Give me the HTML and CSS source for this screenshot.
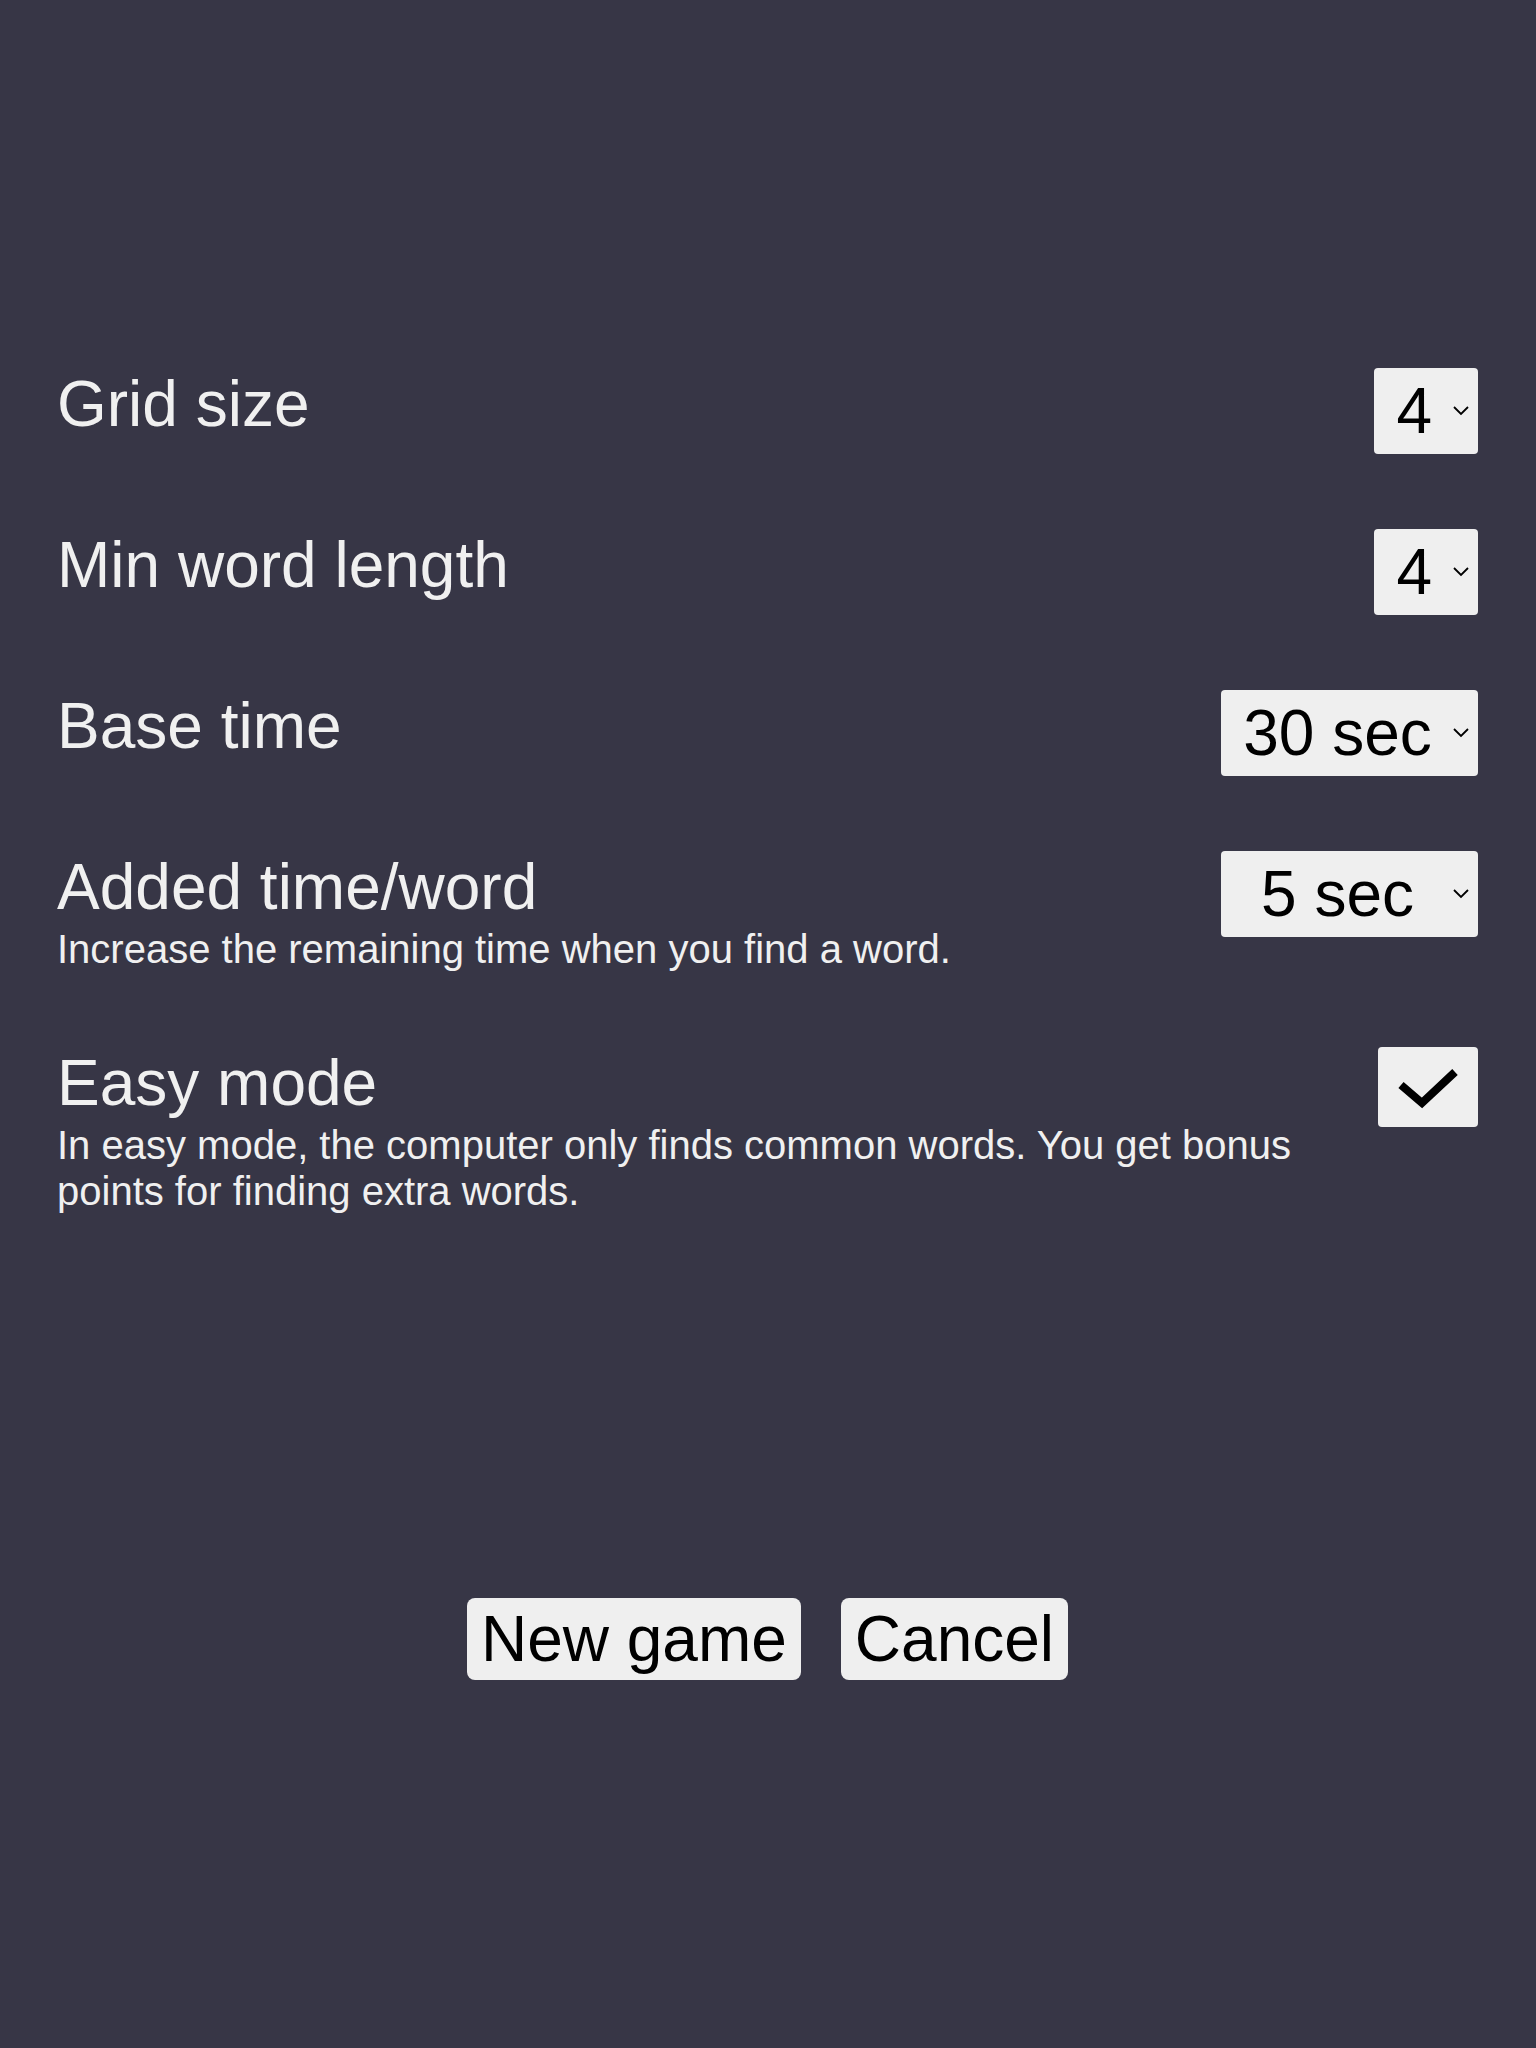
FILE: index.html
```html
<!DOCTYPE html>
<html lang="en">
<head>
<meta charset="utf-8">
<title>Settings</title>
<link rel="stylesheet" href="styles.css">
</head>
<body>
<main class="screen">
  <section class="settings">
    <div class="row">
      <div class="text"><div class="label">Grid size</div></div>
      <div class="select"><span class="value">4</span><svg class="chev" viewBox="0 0 16 10" width="16" height="10"><polyline points="1,1 8,8 15,1" fill="none" stroke="#000" stroke-width="1.8"/></svg></div>
    </div>
    <div class="row">
      <div class="text"><div class="label">Min word length</div></div>
      <div class="select"><span class="value">4</span><svg class="chev" viewBox="0 0 16 10" width="16" height="10"><polyline points="1,1 8,8 15,1" fill="none" stroke="#000" stroke-width="1.8"/></svg></div>
    </div>
    <div class="row">
      <div class="text"><div class="label">Base time</div></div>
      <div class="select wide"><span class="value">30 sec</span><svg class="chev" viewBox="0 0 16 10" width="16" height="10"><polyline points="1,1 8,8 15,1" fill="none" stroke="#000" stroke-width="1.8"/></svg></div>
    </div>
    <div class="row">
      <div class="text">
        <div class="label">Added time/word</div>
        <div class="desc">Increase the remaining time when you find a word.</div>
      </div>
      <div class="select wide"><span class="value">5 sec</span><svg class="chev" viewBox="0 0 16 10" width="16" height="10"><polyline points="1,1 8,8 15,1" fill="none" stroke="#000" stroke-width="1.8"/></svg></div>
    </div>
    <div class="row">
      <div class="text">
        <div class="label">Easy mode</div>
        <div class="desc">In easy mode, the computer only finds common words. You get bonus points for finding extra words.</div>
      </div>
      <div class="checkbox"><svg viewBox="0 0 100 80" width="100" height="80"><polyline points="23,38 44,56 77,25" fill="none" stroke="#000" stroke-width="8"/></svg></div>
    </div>
  </section>
  <div class="actions">
    <button class="btn">New game</button>
    <button class="btn">Cancel</button>
  </div>
</main>
</body>
</html>
```
FILE: styles.css
```css
html, body {
  margin: 0;
  padding: 0;
}
body {
  background: #373646;
  font-family: "Liberation Sans", Arial, Helvetica, sans-serif;
  color: #f0f0f0;
}
.screen {
  min-height: 100vh;
  box-sizing: border-box;
  display: flex;
  flex-direction: column;
  justify-content: center;
  padding: 0 58px 0 57px;
}
.settings {
  display: flex;
  flex-direction: column;
  gap: 75px;
}
.row {
  display: flex;
  align-items: flex-start;
  justify-content: space-between;
  gap: 24px;
}
.text {
  flex: 1;
  min-width: 0;
}
.label {
  font-size: 64px;
  line-height: 72px;
}
.desc {
  font-size: 40px;
  line-height: 46px;
  margin-top: 3px;
}
.select {
  flex: none;
  display: flex;
  align-items: center;
  height: 86px;
  box-sizing: border-box;
  padding: 0 9px 0 22px;
  background: #efefef;
  border-radius: 4px;
  color: #000;
  font-size: 64px;
}
.select.wide {
  width: 257px;
}
.value {
  flex: 1;
  text-align: center;
}
.chev {
  flex: none;
  margin-left: 21px;
}
.checkbox {
  flex: none;
  width: 100px;
  height: 80px;
  background: #efefef;
  border-radius: 4px;
}
.checkbox svg {
  display: block;
}
.actions {
  display: flex;
  justify-content: center;
  gap: 40px;
  margin-top: 384px;
}
.btn {
  font-family: "Liberation Sans", Arial, Helvetica, sans-serif;
  font-size: 64px;
  line-height: 72px;
  height: 82px;
  padding: 0 14px;
  border: none;
  border-radius: 8px;
  background: #efefef;
  color: #000;
}
```
